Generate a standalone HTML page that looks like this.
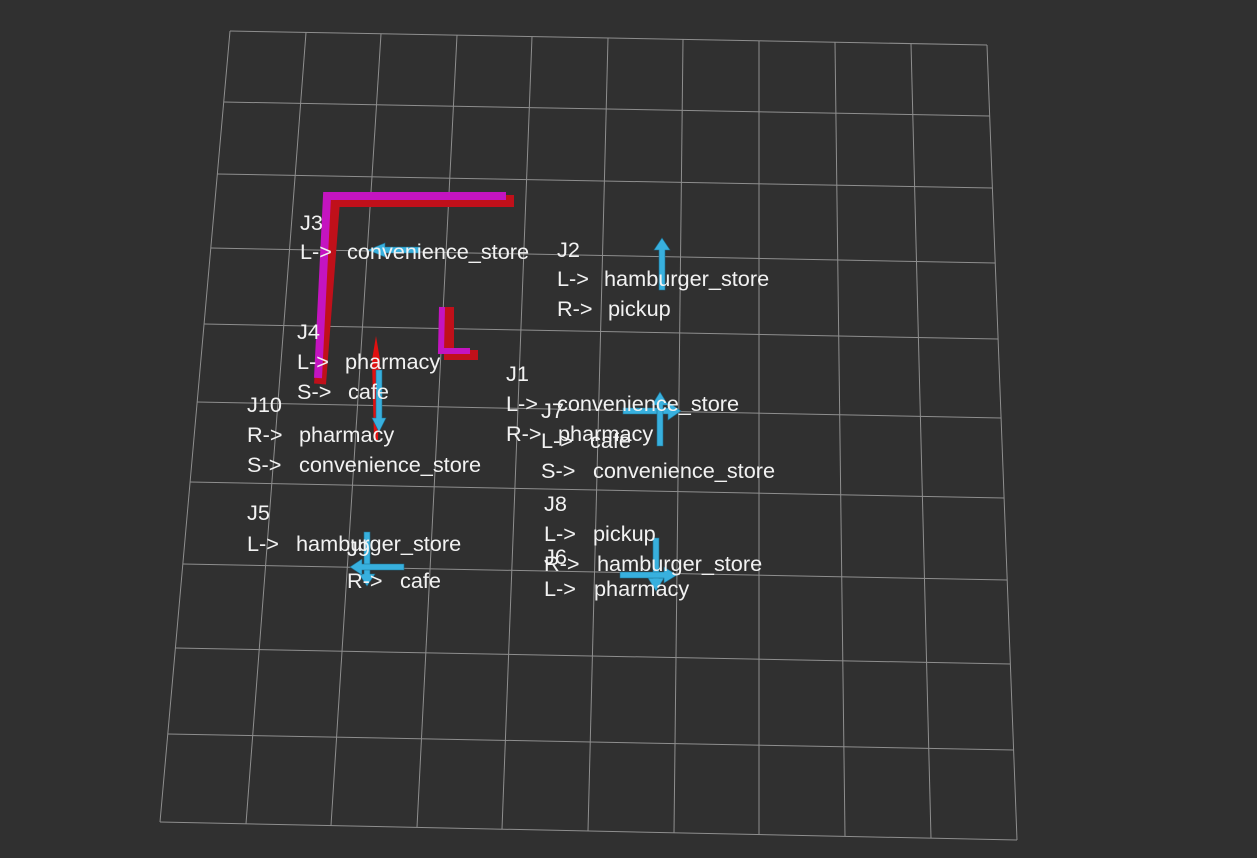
<!DOCTYPE html>
<html><head><meta charset="utf-8"><style>
html,body{margin:0;padding:0;background:#303030;}
svg{display:block;}
text{font-family:"Liberation Sans",sans-serif;font-size:21.7px;fill:#f2f2f2;}
</style></head><body>
<svg width="1257" height="858" viewBox="0 0 1257 858" xmlns="http://www.w3.org/2000/svg">
<rect width="1257" height="858" fill="#303030"/>
<g stroke="#8e8e8e" stroke-width="1" fill="none">
<line x1="230" y1="31" x2="987" y2="45"/>
<line x1="223.7" y1="102" x2="989.7" y2="116"/>
<line x1="217.3" y1="174" x2="992.4" y2="188"/>
<line x1="210.8" y1="248" x2="995.2" y2="263"/>
<line x1="204.1" y1="324" x2="998.1" y2="339"/>
<line x1="197.2" y1="402" x2="1001.1" y2="418"/>
<line x1="190.1" y1="482" x2="1004.1" y2="498"/>
<line x1="182.8" y1="564" x2="1007.2" y2="580"/>
<line x1="175.4" y1="648" x2="1010.4" y2="664"/>
<line x1="167.8" y1="734" x2="1013.6" y2="750"/>
<line x1="160" y1="822" x2="1017" y2="840"/>
<line x1="230" y1="31" x2="160" y2="822"/>
<line x1="306" y1="32.4" x2="246" y2="823.8"/>
<line x1="381" y1="33.8" x2="331" y2="825.6"/>
<line x1="457" y1="35.2" x2="417" y2="827.4"/>
<line x1="532" y1="36.6" x2="502" y2="829.2"/>
<line x1="608" y1="38" x2="588" y2="831"/>
<line x1="683" y1="39.4" x2="674" y2="832.8"/>
<line x1="759" y1="40.8" x2="759" y2="834.6"/>
<line x1="835" y1="42.2" x2="845" y2="836.4"/>
<line x1="911" y1="43.6" x2="931" y2="838.2"/>
<line x1="987" y1="45" x2="1017" y2="840"/>
</g>
<polyline points="320,384 334,201 514,201" fill="none" stroke="#c0101a" stroke-width="12" stroke-linejoin="miter"/>
<polyline points="318,378 327,196 506,196" fill="none" stroke="#c414c0" stroke-width="8" stroke-linejoin="miter"/>
<polyline points="449,307 449,355 478,355" fill="none" stroke="#c0101a" stroke-width="10"/>
<polyline points="442,307 441,351 470,351" fill="none" stroke="#c414c0" stroke-width="6"/>
<polygon points="376,336 380,360 378,440 374,440 372,360" fill="#e01010"/>
<g fill="#38b0de" stroke="#1b6f90" stroke-width="0.6">
<polygon points="420,247 385,247 385,243 368,250 385,257 385,253 420,253"/>
<polygon points="659,290 659,250 654,250 662,238 670,250 665,250 665,290"/>
<polygon points="623,408 668,408 668,402 681,411 668,420 668,414 623,414"/>
<polygon points="657,446 657,405 652,405 660,392 668,405 663,405 663,446"/>
<polygon points="376,370 382,370 382,418 386,418 379,432 372,418 376,418"/>
<polygon points="364,532 370,532 370,574 375,574 367,586 359,574 364,574"/>
<polygon points="404,564 362,564 362,559 350,567 362,575 362,570 404,570"/>
<polygon points="653,538 659,538 659,578 664,578 656,591 648,578 653,578"/>
<polygon points="620,572 664,572 664,567 677,575 664,583 664,578 620,578"/>
</g>
<text x="300" y="230">J3</text>
<text x="300" y="259">L-&gt;</text><text x="347" y="259">convenience_store</text>
<text x="557" y="257">J2</text>
<text x="557" y="286">L-&gt;</text><text x="604" y="286">hamburger_store</text>
<text x="557" y="316">R-&gt;</text><text x="608" y="316">pickup</text>
<text x="297" y="339">J4</text>
<text x="297" y="369">L-&gt;</text><text x="345" y="369">pharmacy</text>
<text x="297" y="399">S-&gt;</text><text x="348" y="399">cafe</text>
<text x="247" y="412">J10</text>
<text x="247" y="442">R-&gt;</text><text x="299" y="442">pharmacy</text>
<text x="247" y="472">S-&gt;</text><text x="299" y="472">convenience_store</text>
<text x="506" y="381">J1</text>
<text x="506" y="411">L-&gt;</text><text x="557" y="411">convenience_store</text>
<text x="506" y="441">R-&gt;</text><text x="558" y="441">pharmacy</text>
<text x="541" y="418">J7</text>
<text x="541" y="448">L-&gt;</text><text x="590" y="448">cafe</text>
<text x="541" y="478">S-&gt;</text><text x="593" y="478">convenience_store</text>
<text x="544" y="511">J8</text>
<text x="544" y="541">L-&gt;</text><text x="593" y="541">pickup</text>
<text x="544" y="571">R-&gt;</text><text x="597" y="571">hamburger_store</text>
<text x="544" y="564">J6</text>
<text x="544" y="596">L-&gt;</text><text x="594" y="596">pharmacy</text>
<text x="247" y="520">J5</text>
<text x="247" y="551">L-&gt;</text><text x="296" y="551">hamburger_store</text>
<text x="347" y="556">J9</text>
<text x="347" y="588">R-&gt;</text><text x="400" y="588">cafe</text>
</svg>
</body></html>
